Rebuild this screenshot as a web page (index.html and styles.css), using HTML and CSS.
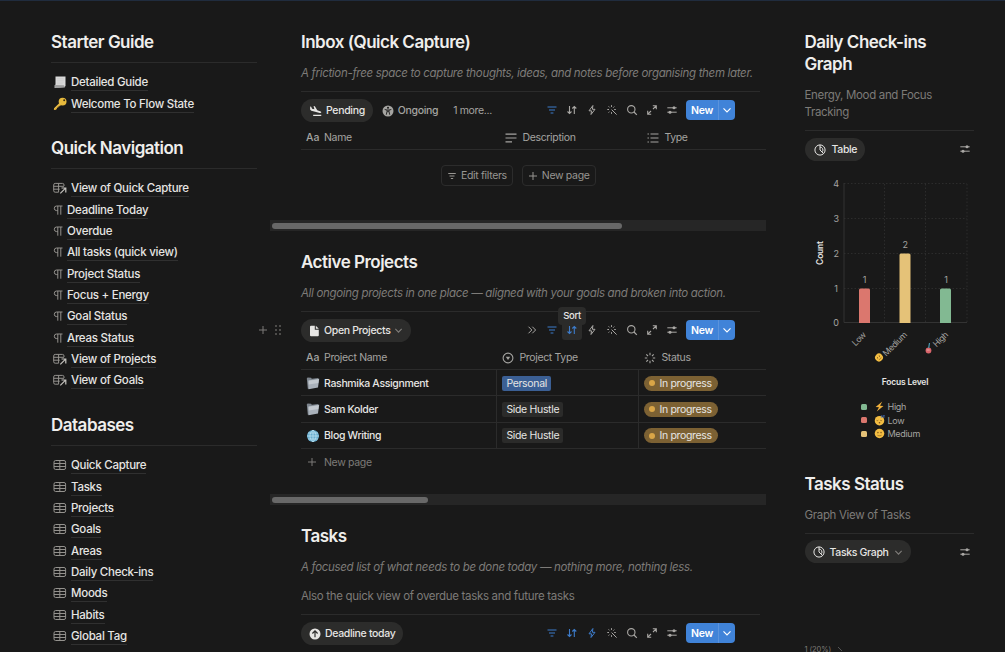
FILE: index.html
```
<!DOCTYPE html>
<html lang="en">
<head>
    <meta charset="UTF-8">
    <title>Flow State</title>
    <link rel="stylesheet" href="styles.css">
</head>
<body>

<!-- Icon sprite -->
<svg class="sprite" xmlns="http://www.w3.org/2000/svg">
  <symbol id="i-table" viewBox="0 0 14 12"><g fill="none" stroke="currentColor"><rect x="1" y="1.5" width="11.6" height="9" rx="1.6"/><path d="M1 4.5h11.6M1 7.5h11.6M6.8 1.5v9"/></g></symbol>
  <symbol id="i-linked" viewBox="0 0 14 12"><g fill="none" stroke="currentColor"><path d="M5.5 10.2H2.2A1.5 1.5 0 0 1 .7 8.7V2.9a1.5 1.5 0 0 1 1.5-1.5h7.3A1.5 1.5 0 0 1 11 2.9V4M.7 4.3H11M.7 7.2h6M5.6 1.4v8.8"/></g><path d="M7.3 11.4l5-5M8.5 6h4.3v4.5" fill="none" stroke="#c4c2be" stroke-width="1.2"/></symbol>
  <symbol id="i-para" viewBox="0 0 10 12"><path d="M9.5 2H3.6a2.3 2.3 0 0 0 0 4.6h1.2M4.8 2v8.7M7.8 2v8.7" fill="none" stroke="currentColor"/></symbol>
  <symbol id="i-filter" viewBox="0 0 12 12"><path d="M1.5 3h9M3 6h6M4.6 9h2.8" fill="none" stroke="currentColor" stroke-width="1.2"/></symbol>
  <symbol id="i-sort" viewBox="0 0 12 12"><path d="M3.5 2v7.5M1.5 7.5l2 2 2-2M8.3 10V2.5M6.3 4.5l2-2 2 2" fill="none" stroke="currentColor" stroke-width="1.1"/></symbol>
  <symbol id="i-bolt" viewBox="0 0 12 12"><path d="M6.9 1.5L3 6.8h2.5L5 10.5l4-5.2H6.4z" fill="none" stroke="currentColor" stroke-linejoin="round"/></symbol>
  <symbol id="i-wand" viewBox="0 0 12 12"><path d="M5.6 5.6l5 5M5.5 1.2v1.7M2.6 2.4l1 1M1.3 5.5H3M2.6 8.6l1-1M5.5 8.2v1.6M8.3 2.6l-1 1M8.2 5.5h1.6" fill="none" stroke="currentColor"/></symbol>
  <symbol id="i-search" viewBox="0 0 12 12"><circle cx="5.3" cy="5.3" r="3.7" fill="none" stroke="currentColor" stroke-width="1.1"/><path d="M8 8l2.8 2.8" stroke="currentColor" stroke-width="1.2"/></symbol>
  <symbol id="i-expand" viewBox="0 0 12 12"><path d="M7 5l3.2-3.2M6.8 1.7h3.5v3.5M5 7l-3.2 3.2M1.7 6.8v3.5h3.5" fill="none" stroke="currentColor" stroke-width="1.1"/></symbol>
  <symbol id="i-sliders" viewBox="0 0 12 12"><g stroke="currentColor"><path d="M1.3 3.8h9.4M1.3 8.2h9.4"/></g><circle cx="8" cy="3.8" r="1.5" fill="currentColor"/><circle cx="4" cy="8.2" r="1.5" fill="currentColor"/></symbol>
  <symbol id="i-down" viewBox="0 0 10 10"><path d="M1.5 3.3L5 6.8l3.5-3.5" fill="none" stroke="currentColor" stroke-width="1.2"/></symbol>
  <symbol id="i-more" viewBox="0 0 12 12"><path d="M2.5 2.7L5.8 6 2.5 9.3M6.3 2.7L9.6 6 6.3 9.3" fill="none" stroke="currentColor"/></symbol>
  <symbol id="i-plus" viewBox="0 0 10 10"><path d="M5 1v8M1 5h8" stroke="currentColor"/></symbol>
  <symbol id="i-chart" viewBox="0 0 12 12"><g fill="none" stroke="currentColor"><circle cx="6" cy="6" r="5.1"/><path d="M6 .9V6l3.6 3.6M6 3.1a2.9 2.9 0 0 1 2.4 4.6"/></g></symbol>
  <symbol id="i-land" viewBox="0 0 14 12"><path d="M1.2 1.2l1.1.3 1 2 2.5.7-.9-3.6 1.4.4 2.6 4.3 3 .9c1 .3 1.5.9 1.3 1.5-.2.5-.9.6-1.6.4L2.5 5.6c-.9-.3-1.3-.8-1.3-1.7zM4.5 10h8.7v1.3H4.5z" fill="currentColor"/></symbol>
  <symbol id="i-access" viewBox="0 0 12 12"><circle cx="6" cy="6" r="5.5" fill="currentColor"/><circle cx="6" cy="2.7" r="1" fill="#191919"/><path d="M2.7 4.5L5 5v1.5L4.3 9.7M9.3 4.5L7 5v1.5l.7 3.2M5 5h2M5.2 6.6h1.6" fill="none" stroke="#191919" stroke-width=".9"/></symbol>
  <symbol id="i-text" viewBox="0 0 12 12"><path d="M.5 2.2h11M.5 6h11M.5 9.8h6.500" stroke="currentColor" stroke-width="1.2"/></symbol>
  <symbol id="i-list" viewBox="0 0 12 12"><path d="M3.5 2h8M3.5 6h8M3.5 10h8M.5 2h1.4M.5 6h1.4M.5 10h1.4" stroke="currentColor" stroke-width="1.2"/></symbol>
  <symbol id="i-select" viewBox="0 0 12 12"><circle cx="6" cy="6" r="4.9" fill="none" stroke="currentColor" stroke-width="1.1"/><path d="M3.8 4.7h4.4L6 8z" fill="currentColor"/></symbol>
  <symbol id="i-status" viewBox="0 0 12 12"><path d="M6 .8v2.4M6 8.8v2.4M.8 6h2.4M8.8 6h2.4M2.3 2.3L4 4M8 8l1.700 1.700M9.700 2.300L8 4M4 8L2.300 9.700" stroke="currentColor" stroke-width="1.1"/></symbol>
  <symbol id="i-page" viewBox="0 0 10 12"><path d="M1.5.8h3.800v3.900h4v5.600a1 1 0 0 1-1 1H1.500a1 1 0 0 1-1-1V1.800a1 1 0 0 1 1-1z" fill="currentColor"/><path d="M6.300.8l3 3h-3z" fill="currentColor"/></symbol>
  <symbol id="i-up" viewBox="0 0 12 12"><circle cx="6" cy="6" r="5.5" fill="currentColor"/><path d="M6 9.3V3M3.4 5.5L6 2.900l2.600 2.600" fill="none" stroke="#2c2c2b" stroke-width="1.2"/></symbol>
  <symbol id="e-scroll" viewBox="0 0 14 14"><path d="M2.5 1.500h10v9.500l-1 1-10 1L2.500 9z" fill="#d9d9d9"/><path d="M1.500 10l9.500.2 1 2.300-9 .5c-1 0-1.500-.6-1.500-1.400z" fill="#9e9e9e"/><path d="M3.800 3.700h7M3.800 5.400h7M3.800 7.100h7M3.800 8.800h6" stroke="#c4c4c4" stroke-width=".5"/></symbol>
  <symbol id="e-key" viewBox="0 0 14 14"><path d="M1 11.200L6.400 6l1.800 1.900-1.600 1.400-1 .1-.3 1.200-1.200.2-.2 1.300-1.400.9H.9z" fill="#d9a62e"/><circle cx="9.600" cy="4.600" r="3.900" fill="#e6b93c"/><circle cx="11.200" cy="3.200" r="1" fill="#3a2d10"/><path d="M1.400 11.800l6-5.500" stroke="#f5d879" stroke-width=".6"/></symbol>
  <symbol id="e-folder" viewBox="0 0 14 14"><path d="M.8 2.500l.8-1 3.500.2.700 1 6.500-.8.200 2L3 12.800H1.800z" fill="#7d858e"/><path d="M2.400 4.400l10.800-1.700-1.200 8.800-9.400 1.700z" fill="#a9b1ba"/><path d="M2.600 4.700l10.200-1.500-.5 3.900-9.600 1.500z" fill="#c3c9cf"/></symbol>
  <symbol id="e-globe" viewBox="0 0 14 14"><circle cx="7" cy="7" r="6" fill="#69aed0"/><path d="M1 7h12M7 1v12M2 4h10M2 10h10M7 1c-4 3.500-4 8.500 0 12M7 1c4 3.500 4 8.500 0 12" fill="none" stroke="#b9e0ef" stroke-width=".8"/></symbol>
  <symbol id="e-bolt" viewBox="0 0 12 12"><path d="M9 .6L1.800 6.500l3.600.4L3 11.400l7.300-6-3.700-.3z" fill="#f0b03c"/></symbol>
  <symbol id="e-smile" viewBox="0 0 12 12"><circle cx="6" cy="6" r="5.200" fill="#f3bd42"/><ellipse cx="4.300" cy="5" rx=".6" ry=".9" fill="#5b3a12"/><ellipse cx="7.700" cy="5" rx=".6" ry=".9" fill="#5b3a12"/><path d="M3.800 7.900c1.300.8 3.100.8 4.400 0" fill="none" stroke="#5b3a12" stroke-width=".6"/></symbol>
  <symbol id="e-sleep" viewBox="0 0 12 12"><circle cx="6" cy="6.200" r="5.200" fill="#f3bd42"/><path d="M2.700 5.700c.7.600 1.400.6 2 0M6.800 5.700c.7.600 1.400.6 2 0" fill="none" stroke="#5b3a12" stroke-width=".6"/><circle cx="6" cy="8.500" r=".9" fill="#7a4b18"/><path d="M7.500.9h1.700L7.800 2.600h1.700M9.900.6h1.600L10.200 2.300h1.500" fill="none" stroke="#4a78c8" stroke-width=".7"/></symbol>
</svg>

<div class="page">

  <!-- Left navigation -->
  <div class="sidebar">
    <h2>Starter Guide</h2>
    <ul class="links">
      <li><svg class="emoji"><use href="#e-scroll"/></svg><a>Detailed Guide</a></li>
      <li><svg class="emoji"><use href="#e-key"/></svg><a>Welcome To Flow State</a></li>
    </ul>

    <h2>Quick Navigation</h2>
    <ul class="links">
      <li><svg class="wide"><use href="#i-linked"/></svg><a>View of Quick Capture</a></li>
      <li><svg class="para"><use href="#i-para"/></svg><a>Deadline Today</a></li>
      <li><svg class="para"><use href="#i-para"/></svg><a>Overdue</a></li>
      <li><svg class="para"><use href="#i-para"/></svg><a>All tasks (quick view)</a></li>
      <li><svg class="para"><use href="#i-para"/></svg><a>Project Status</a></li>
      <li><svg class="para"><use href="#i-para"/></svg><a>Focus + Energy</a></li>
      <li><svg class="para"><use href="#i-para"/></svg><a>Goal Status</a></li>
      <li><svg class="para"><use href="#i-para"/></svg><a>Areas Status</a></li>
      <li><svg class="wide"><use href="#i-linked"/></svg><a>View of Projects</a></li>
      <li><svg class="wide"><use href="#i-linked"/></svg><a>View of Goals</a></li>
    </ul>

    <h2>Databases</h2>
    <ul class="links">
      <li><svg class="wide"><use href="#i-table"/></svg><a>Quick Capture</a></li>
      <li><svg class="wide"><use href="#i-table"/></svg><a>Tasks</a></li>
      <li><svg class="wide"><use href="#i-table"/></svg><a>Projects</a></li>
      <li><svg class="wide"><use href="#i-table"/></svg><a>Goals</a></li>
      <li><svg class="wide"><use href="#i-table"/></svg><a>Areas</a></li>
      <li><svg class="wide"><use href="#i-table"/></svg><a>Daily Check-ins</a></li>
      <li><svg class="wide"><use href="#i-table"/></svg><a>Moods</a></li>
      <li><svg class="wide"><use href="#i-table"/></svg><a>Habits</a></li>
      <li><svg class="wide"><use href="#i-table"/></svg><a>Global Tag</a></li>
    </ul>
  </div>

  <!-- Main column -->
  <div class="main">
    <div class="section inbox">
      <h2>Inbox (Quick Capture)</h2>
      <p class="note"><em>A friction-free space to capture thoughts, ideas, and notes before organising them later.</em></p>
      <div class="toolbar">
        <span class="pill"><svg class="ic13"><use href="#i-land"/></svg>Pending</span>
        <span class="tab"><svg class="ic12"><use href="#i-access"/></svg>Ongoing</span>
        <span class="tab plain">1 more...</span>
        <div class="tools">
          <svg class="blue"><use href="#i-filter"/></svg>
          <svg><use href="#i-sort"/></svg>
          <svg><use href="#i-bolt"/></svg>
          <svg><use href="#i-wand"/></svg>
          <svg><use href="#i-search"/></svg>
          <svg><use href="#i-expand"/></svg>
          <svg><use href="#i-sliders"/></svg>
          <span class="new"><b>New</b><i><svg><use href="#i-down"/></svg></i></span>
        </div>
      </div>
      <div class="row head">
        <div><span class="aa">Aa</span>Name</div>
        <div><svg class="ic12"><use href="#i-text"/></svg>Description</div>
        <div><svg class="ic12"><use href="#i-list"/></svg>Type</div>
      </div>
      <div class="empty">
        <span><svg><use href="#i-filter"/></svg>Edit filters</span>
        <span><svg><use href="#i-plus"/></svg>New page</span>
      </div>
    </div>
    <div class="scroll"><div class="thumb long"></div></div>

    <div class="section projects">
      <h2>Active Projects</h2>
      <p class="note"><em>All ongoing projects in one place — aligned with your goals and broken into action.</em></p>
      <div class="toolbar">
        <div class="handle">
          <svg class="ic10"><use href="#i-plus"/></svg>
          <svg class="dots" viewBox="0 0 6 10"><path d="M.3 1h1.4M4.3 1h1.4M.3 5h1.4M4.3 5h1.4M.3 9h1.4M4.3 9h1.4" stroke="currentColor" stroke-width="1.4"/></svg>
        </div>
        <span class="pill"><svg class="page-ic"><use href="#i-page"/></svg>Open Projects<svg class="caret"><use href="#i-down"/></svg></span>
        <div class="tools">
          <svg><use href="#i-more"/></svg>
          <svg class="blue"><use href="#i-filter"/></svg>
          <span class="hover"><svg class="blue"><use href="#i-sort"/></svg><span class="tip">Sort</span></span>
          <svg><use href="#i-bolt"/></svg>
          <svg><use href="#i-wand"/></svg>
          <svg><use href="#i-search"/></svg>
          <svg><use href="#i-expand"/></svg>
          <svg><use href="#i-sliders"/></svg>
          <span class="new"><b>New</b><i><svg><use href="#i-down"/></svg></i></span>
        </div>
      </div>
      <div class="row head">
        <div><span class="aa">Aa</span>Project Name</div>
        <div><svg class="ic12 near"><use href="#i-select"/></svg>Project Type</div>
        <div><svg class="ic12 near"><use href="#i-status"/></svg>Status</div>
      </div>
      <div class="row item">
        <div><svg class="emoji"><use href="#e-folder"/></svg>Rashmika Assignment</div>
        <div><span class="tag personal">Personal</span></div>
        <div><span class="status">In progress</span></div>
      </div>
      <div class="row item">
        <div><svg class="emoji"><use href="#e-folder"/></svg>Sam Kolder</div>
        <div><span class="tag">Side Hustle</span></div>
        <div><span class="status">In progress</span></div>
      </div>
      <div class="row item">
        <div><svg class="emoji"><use href="#e-globe"/></svg>Blog Writing</div>
        <div><span class="tag">Side Hustle</span></div>
        <div><span class="status">In progress</span></div>
      </div>
      <div class="add"><svg class="ic10"><use href="#i-plus"/></svg>New page</div>
    </div>
    <div class="scroll"><div class="thumb"></div></div>

    <div class="section">
      <h2>Tasks</h2>
      <p class="note"><em>A focused list of what needs to be done today — nothing more, nothing less.</em></p>
      <p class="note second">Also the quick view of overdue tasks and future tasks</p>
      <div class="toolbar">
        <span class="pill"><svg class="ic12"><use href="#i-up"/></svg>Deadline today</span>
        <div class="tools">
          <svg class="blue"><use href="#i-filter"/></svg>
          <svg class="blue"><use href="#i-sort"/></svg>
          <svg class="blue"><use href="#i-bolt"/></svg>
          <svg><use href="#i-wand"/></svg>
          <svg><use href="#i-search"/></svg>
          <svg><use href="#i-expand"/></svg>
          <svg><use href="#i-sliders"/></svg>
          <span class="new"><b>New</b><i><svg><use href="#i-down"/></svg></i></span>
        </div>
      </div>
    </div>
  </div>

  <!-- Right column -->
  <div class="aside">
    <h2>Daily Check-ins Graph</h2>
    <p>Energy, Mood and Focus Tracking</p>
    <div class="viewbar">
      <span class="pill single"><svg class="ic12"><use href="#i-chart"/></svg>Table</span>
      <svg class="set"><use href="#i-sliders"/></svg>
    </div>
    <svg class="chart" viewBox="0 0 169 230">
      <path class="grid" d="M39 13.5h123M39 48.5h123M39 83.5h123M39 118.5h123M79.5 14v139M120.5 14v139M162 14v139"/>
      <path class="axis" d="M39 13v139.5h123"/>
      <path d="M54 153v-33a1.5 1.5 0 0 1 1.5-1.5h8a1.5 1.5 0 0 1 1.5 1.5v33z" fill="#db776e"/>
      <path d="M94.5 153v-68a1.5 1.5 0 0 1 1.5-1.5h8a1.5 1.5 0 0 1 1.5 1.5v68z" fill="#e5c278"/>
      <path d="M135 153v-33a1.5 1.5 0 0 1 1.5-1.5h8a1.5 1.5 0 0 1 1.5 1.5v33z" fill="#82b992"/>
      <g class="num">
        <text x="31" y="17">4</text><text x="31" y="52">3</text><text x="31" y="86.500">2</text><text x="31" y="121.500">1</text><text x="31" y="156">0</text>
        <text x="59.5" y="113">1</text><text x="100" y="78">2</text><text x="141" y="113">1</text>
      </g>
      <text class="title" x="17.5" y="83" transform="rotate(-90 17.5 83)">Count</text>
      <g class="cat">
        <text transform="translate(61.5 165.5) rotate(-45)">Low</text>
        <text transform="translate(102.5 165.5) rotate(-45)">Medium</text>
        <text transform="translate(143.5 165.5) rotate(-45)">High</text>
      </g>
      <use href="#e-smile" x="-4.500" y="-4.500" width="9" height="9" transform="translate(74 187.500) rotate(-45)"/>
      <circle cx="123.5" cy="180.5" r="2.9" fill="#d9656b"/><path d="M123.700 178l.8-5" stroke="#4c9bb5" stroke-width="1.2"/><path d="M121.700 180h3" stroke="#f1c3c0" stroke-width=".7"/>
      <text class="title" x="100" y="215">Focus Level</text>
    </svg>
    <ul class="legend">
      <li class="high"><svg><use href="#e-bolt"/></svg>High</li>
      <li class="low"><svg><use href="#e-sleep"/></svg>Low</li>
      <li class="medium"><svg><use href="#e-smile"/></svg>Medium</li>
    </ul>

    <h2>Tasks Status</h2>
    <p>Graph View of Tasks</p>
    <div class="viewbar">
      <span class="pill graph"><svg class="ic12"><use href="#i-chart"/></svg>Tasks Graph<svg class="caret"><use href="#i-down"/></svg></span>
      <svg class="set"><use href="#i-sliders"/></svg>
    </div>
    <div class="slice">1 (20%)<svg viewBox="0 0 6 6"><path d="M1 1l4 4" stroke="#555"/></svg></div>
  </div>

</div>

</body>
</html>
```
FILE: styles.css
```
* {
  box-sizing: border-box;
}

html, body {
  margin: 0;
  padding: 0;
}

body {
  height: 652px;
  overflow: hidden;
  background: #191919;
  border-top: 1px solid #202c3e;
  color: #e6e5e3;
  font: 10.5px/17px Inter, "Liberation Sans", sans-serif;
  letter-spacing: -0.33px;
}

.sprite {
  display: none;
}

svg {
  flex: none;
}

.page {
  display: flex;
  padding: 30px 32px 0 51px;
}

h2 {
  margin: 0;
  font-size: 17px;
  line-height: 22px;
  font-weight: 600;
  letter-spacing: -0.5px;
  color: #efeeec;
}

ul {
  list-style: none;
  margin: 0;
  padding: 0;
}

/* Left navigation */
.sidebar {
  width: 206px;
  flex: none;
}

.links {
  margin: 9px 0 22px;
  padding-top: 9.5px;
  border-top: 1px solid #2b2b2b;
}

.links li {
  display: flex;
  align-items: center;
  height: 21.35px;
  padding-left: 2px;
  color: #94928e;
}

.links svg {
  margin-top: -2px;
}

.links a {
  color: #e6e5e3;
  font-size: 11.5px;
  line-height: 15px;
  font-weight: 500;
  letter-spacing: -0.26px;
  border-bottom: 1px solid #303030;
}

.emoji {
  width: 14px;
  height: 14px;
  margin-right: 4px;
}

.wide {
  width: 14px;
  height: 12px;
  margin-right: 4px;
}

.para {
  width: 10px;
  height: 12px;
  margin-right: 4px;
}

/* Main column */
.main {
  width: 496px;
  flex: none;
  margin-left: 13px;
}

.section {
  padding-left: 31px;
}

.inbox {
  height: 189px;
}

.projects {
  height: 243px;
}

.note {
  margin: 10px 0 0;
  height: 21px;
  line-height: 21px;
  font-size: 11.5px;
  letter-spacing: -0.32px;
  color: #7d7b78;
  white-space: nowrap;
}

.second {
  height: 22px;
  margin-top: 7px;
  line-height: 22px;
}

.toolbar {
  position: relative;
  display: flex;
  align-items: center;
  width: 459px;
  height: 32px;
  margin-top: 7px;
  padding: 6px 25px 1px 0;
  border-top: 1px solid #2b2b2b;
}

.pill {
  display: flex;
  align-items: center;
  gap: 4px;
  height: 23px;
  padding: 1px 8px 0;
  border-radius: 12px;
  background: #2c2c2b;
  color: #e6e5e3;
  font-weight: 500;
}

.single {
  gap: 6px;
  padding-left: 9px;
}

.graph {
  gap: 5px;
}

.tab {
  display: flex;
  align-items: center;
  gap: 4px;
  margin-left: 9px;
  padding-top: 1px;
  color: #a5a4a1;
  font-weight: 500;
}

.plain {
  margin-left: 15px;
  font-weight: 400;
}

.ic10 { width: 10px; height: 10px; }
.ic12 { width: 12px; height: 12px; }
.ic13 { width: 13px; height: 12px; }
.page-ic { width: 11px; height: 12px; }
.caret { width: 9px; height: 9px; color: #807e7b; }

.tools {
  display: flex;
  align-items: center;
  gap: 8px;
  margin-left: auto;
  color: #aaa8a5;
}

.tools svg {
  width: 12px;
  height: 12px;
}

.tools .blue {
  color: #3d7ccb;
}

.new {
  display: flex;
  align-items: center;
  width: 49px;
  height: 20px;
  border-radius: 4px;
  background: #4083d8;
  color: #fff;
}

.new b {
  width: 32px;
  padding-top: 1px;
  text-align: center;
  font-weight: 600;
}

.new i {
  display: flex;
  align-items: center;
  justify-content: center;
  flex: 1;
  height: 20px;
  border-left: 1px solid #5b93dc;
}

.tools .new svg {
  width: 10px;
  height: 10px;
}

.hover {
  position: relative;
  display: flex;
  align-items: center;
  justify-content: center;
  width: 20px;
  height: 20px;
  margin: 0 -4px;
  border-radius: 3px;
  background: #2b2b2a;
}

.tip {
  position: absolute;
  left: -4px;
  bottom: 15px;
  width: 28px;
  height: 18px;
  border-radius: 4px;
  background: #2b2b2a;
  color: #e6e5e3;
  font-size: 9.5px;
  line-height: 18px;
  font-weight: 500;
  text-align: center;
}

/* drag handle that floats in the gutter */
.handle {
  position: absolute;
  left: -43px;
  top: 13px;
  display: flex;
  align-items: center;
  gap: 7px;
  color: #7d7b78;
}

.dots {
  width: 6px;
  height: 10px;
}

.row {
  display: grid;
  grid-template-columns: 195.4px 142px 1fr;
  border-bottom: 1px solid #2b2b2b;
}

.row > div {
  display: flex;
  align-items: center;
}

.head {
  height: 27px;
  padding-top: 3px;
  color: #a5a4a1;
}

.head > div {
  gap: 5px;
  padding-left: 9px;
}

.head > div:first-child {
  padding-left: 5px;
}

.aa {
  width: 13px;
  font-weight: 500;
  letter-spacing: 0;
}

.near {
  margin-left: -3px;
}

.item {
  height: 26.33px;
  font-weight: 500;
}

.item > div {
  padding: 1px 0 0 5px;
  border-left: 1px solid #2b2b2b;
}

.item > div:first-child {
  border-left: 0;
}

.tag {
  height: 15px;
  padding: 0 4px;
  border-radius: 2px;
  background: #2b2b2a;
  line-height: 15px;
  font-weight: 400;
}

.personal {
  background: #3b5f94;
}

.status {
  display: flex;
  align-items: center;
  gap: 4px;
  height: 15px;
  padding: 0 6px 0 5px;
  border-radius: 8px;
  background: #7c6133;
  font-weight: 400;
}

.status::before {
  content: "";
  width: 6px;
  height: 6px;
  border-radius: 50%;
  background: #d9a547;
}

.add {
  display: flex;
  align-items: center;
  gap: 7px;
  height: 27px;
  padding-left: 6px;
  color: #7d7b78;
}

.empty {
  display: flex;
  gap: 9px;
  margin-top: 15px;
  padding-left: 140px;
}

.empty span {
  display: flex;
  align-items: center;
  gap: 4px;
  height: 21px;
  padding: 0 5px;
  border: 1px solid #2c2c2c;
  border-radius: 4px;
  color: #989692;
}

.empty svg {
  width: 10px;
  height: 10px;
}

.scroll {
  height: 11px;
  margin-bottom: 20px;
  padding: 3px 2px 2px;
  background: #262626;
}

.thumb {
  width: 156px;
  height: 6px;
  border-radius: 3px;
  background: #686868;
}

.long {
  width: 350px;
}

/* Right column */
.aside {
  width: 169px;
  flex: none;
  margin-left: 38.5px;
}

.aside p {
  margin: 12px 0 9px;
  font-size: 11.5px;
  line-height: 17px;
  color: #7d7b78;
}

.viewbar {
  display: flex;
  align-items: center;
  justify-content: space-between;
  height: 31px;
  padding: 6px 3px 0 0;
  border-top: 1px solid #2b2b2b;
}

.set {
  width: 12px;
  height: 12px;
  color: #aaa8a5;
}

.chart {
  display: block;
  width: 169px;
  height: 230px;
  margin-top: 9px;
}

.grid {
  fill: none;
  stroke: #2c2c2c;
  stroke-dasharray: 1.5 2;
}

.axis {
  fill: none;
  stroke: #333;
}

.num, .cat, .title {
  font-size: 9px;
  fill: #a5a4a1;
}

.num {
  text-anchor: middle;
}

.cat {
  font-size: 8.5px;
  letter-spacing: -0.4px;
  text-anchor: end;
}

.title {
  fill: #e6e5e3;
  font-size: 8.5px;
  font-weight: 600;
  letter-spacing: -0.2px;
  text-anchor: middle;
}

.legend {
  margin-bottom: 32px;
  padding-left: 56px;
}

.legend li {
  display: flex;
  align-items: center;
  height: 13.6px;
  color: #a5a4a1;
  font-size: 9px;
  letter-spacing: -0.3px;
}

.legend li::before {
  content: "";
  width: 6px;
  height: 6px;
  margin-right: 7px;
  border-radius: 1.5px;
}

.legend .high::before { background: #82b992; }
.legend .low::before { background: #db776e; }
.legend .medium::before { background: #e5c278; }

.legend svg {
  width: 11px;
  height: 11px;
  margin-right: 3px;
}

.slice {
  display: flex;
  align-items: center;
  gap: 6px;
  margin-top: 77px;
  color: #7d7b78;
  font-size: 7.5px;
  letter-spacing: -0.1px;
}

.slice svg {
  width: 6px;
  height: 6px;
}
```
